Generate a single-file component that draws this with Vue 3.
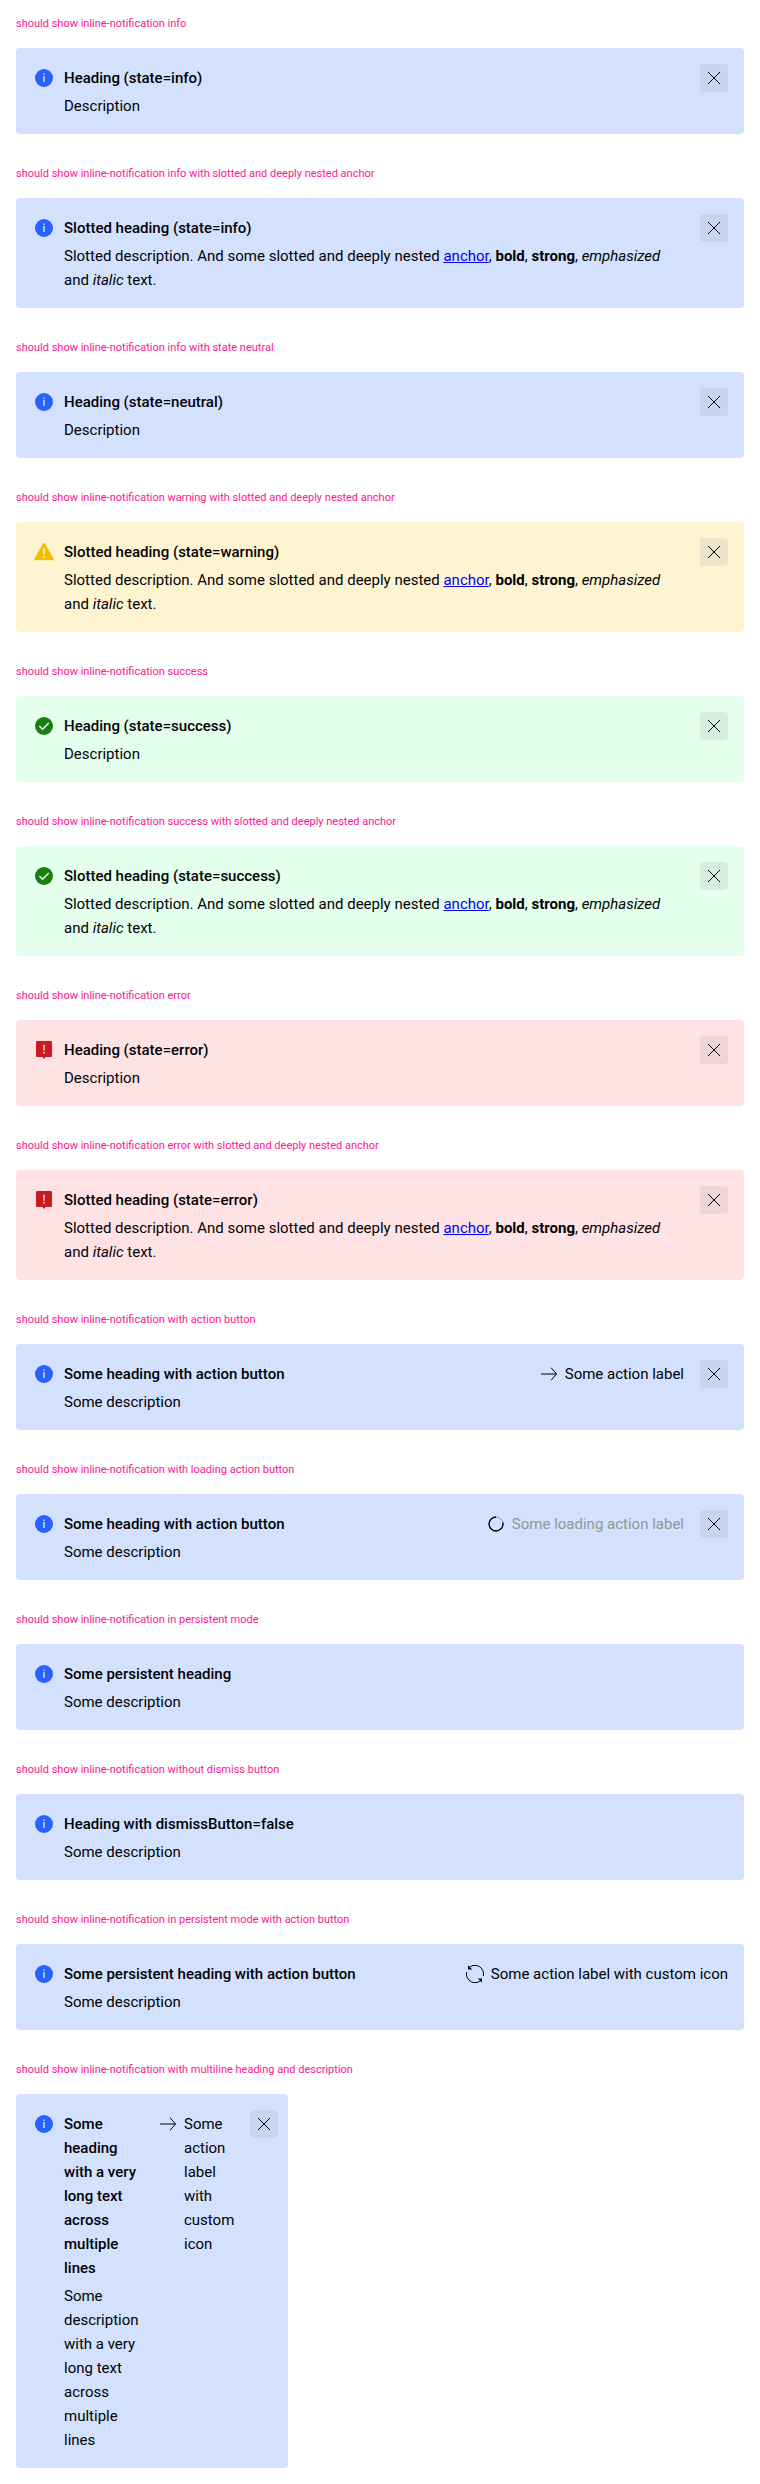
<script setup>
const cases = [
  { title: 'should show inline-notification info', state: 'info', heading: 'Heading (state=info)', text: 'Description', dismiss: true },
  { title: 'should show inline-notification info with slotted and deeply nested anchor', state: 'info', heading: 'Slotted heading (state=info)', slotted: true, dismiss: true },
  { title: 'should show inline-notification info with state neutral', state: 'info', heading: 'Heading (state=neutral)', text: 'Description', dismiss: true },
  { title: 'should show inline-notification warning with slotted and deeply nested anchor', state: 'warning', heading: 'Slotted heading (state=warning)', slotted: true, dismiss: true },
  { title: 'should show inline-notification success', state: 'success', heading: 'Heading (state=success)', text: 'Description', dismiss: true },
  { title: 'should show inline-notification success with slotted and deeply nested anchor', state: 'success', heading: 'Slotted heading (state=success)', slotted: true, dismiss: true },
  { title: 'should show inline-notification error', state: 'error', heading: 'Heading (state=error)', text: 'Description', dismiss: true },
  { title: 'should show inline-notification error with slotted and deeply nested anchor', state: 'error', heading: 'Slotted heading (state=error)', slotted: true, dismiss: true },
  { title: 'should show inline-notification with action button', state: 'info', heading: 'Some heading with action button', text: 'Some description', action: 'Some action label', icon: 'arrow', dismiss: true },
  { title: 'should show inline-notification with loading action button', state: 'info', heading: 'Some heading with action button', text: 'Some description', action: 'Some loading action label', icon: 'spinner', dismiss: true },
  { title: 'should show inline-notification in persistent mode', state: 'info', heading: 'Some persistent heading', text: 'Some description' },
  { title: 'should show inline-notification without dismiss button', state: 'info', heading: 'Heading with dismissButton=false', text: 'Some description' },
  { title: 'should show inline-notification in persistent mode with action button', state: 'info', heading: 'Some persistent heading with action button', text: 'Some description', action: 'Some action label with custom icon', icon: 'reset' },
  { title: 'should show inline-notification with multiline heading and description', state: 'info', heading: 'Some heading with a very long text across multiple lines', text: 'Some description with a very long text across multiple lines', action: 'Some action label with custom icon', icon: 'arrow', dismiss: true, narrow: true },
]
</script>

<template>
  <main class="page">
    <section v-for="c in cases" :key="c.title" class="case">
      <p class="label">{{ c.title }}</p>
      <div class="note" :class="[c.state, { narrow: c.narrow }]">
        <svg class="icon" viewBox="0 0 24 24" aria-hidden="true">
          <template v-if="c.state === 'info'">
            <circle cx="12" cy="12" r="9" fill="#2762ff" />
            <path d="M11.2 7.6h1.5v1.5h-1.5zM11.2 10h1.5v6h-1.5z" fill="#d3e1ff" />
          </template>
          <template v-else-if="c.state === 'warning'">
            <path d="M12 3c.5 0 .8.2 1.1.7l8.6 15.2c.5.8.2 1.3-.7 1.3H3c-.9 0-1.2-.5-.7-1.3L10.9 3.7C11.2 3.2 11.5 3 12 3z" fill="#f4be00" />
            <path d="M11.1 8.2h1.8l-.2 6.3h-1.4zM11.1 16h1.8v1.8h-1.8z" fill="#fff4d2" />
          </template>
          <template v-else-if="c.state === 'success'">
            <circle cx="12" cy="12" r="9" fill="#197e10" />
            <path d="M7.4 12.1l3.2 3.1 6.1-6.3" fill="none" stroke="#e4ffec" stroke-width="1.5" />
          </template>
          <template v-else>
            <path d="M5.5 3h13c1 0 1.5.5 1.5 1.5v13c0 1-.5 1.500-1.500 1.500H13.600L12 20.900 10.400 19H5.500C4.500 19 4 18.500 4 17.500v-13C4 3.500 4.500 3 5.500 3z" fill="#cc1922" />
            <path d="M11.200 6.800h1.600l-.2 6h-1.200zM11.200 14h1.600v1.600h-1.600z" fill="#ffe2e4" />
          </template>
        </svg>
        <div class="body">
          <h2 class="heading">{{ c.heading }}</h2>
          <p v-if="c.slotted" class="text">
            Slotted description. And some slotted and deeply nested <a href="#">anchor</a>, <b>bold</b>,
            <strong>strong</strong>, <em>emphasized</em> and <i>italic</i> text.
          </p>
          <p v-else class="text">{{ c.text }}</p>
        </div>
        <button v-if="c.action" type="button" class="action" :disabled="c.icon === 'spinner'">
          <svg class="glyph" viewBox="0 0 24 24" aria-hidden="true">
            <path v-if="c.icon === 'arrow'" d="M4 12h15.500M14 5.700l5.500 6.300-5.500 6.300" />
            <template v-else-if="c.icon === 'spinner'">
              <circle cx="12" cy="12" r="7" class="track" />
              <path d="M18.900 10.500A7 7 0 1 1 12 5" class="arc" />
            </template>
            <template v-else>
              <path d="M5.200 6.600A8.600 8.600 0 0 1 20.300 14M18.800 17.400A8.600 8.600 0 0 1 3.700 10" />
              <path d="M5 3.200v4.200h4.200zM19 20.800v-4.200h-4.200z" class="tip" />
            </template>
          </svg>
          <span>{{ c.action }}</span>
        </button>
        <button v-if="c.dismiss" type="button" class="close" aria-label="Close notification">
          <svg viewBox="0 0 24 24" aria-hidden="true"><path d="M6 6l12 12M18 6L6 18" /></svg>
        </button>
      </div>
    </section>
  </main>
</template>

<style>
body {
  margin: 0;
  background: #fff;
}
</style>

<style scoped>
.page {
  display: flex;
  flex-direction: column;
  gap: 32px;
  padding: 16px;
  font-family: Roboto, "Liberation Sans", sans-serif;
  font-size: 15px;
  line-height: 24px;
  color: #010205;
}
.label {
  margin: 0 0 16px;
  font-size: 11px;
  line-height: 16px;
  color: #ff1493;
}
.note {
  display: flex;
  align-items: flex-start;
  padding: 16px;
  border-radius: 4px;
  background: #d3e1ff;
}
.warning { background: #fff4d2; }
.success { background: #e4ffec; }
.error { background: #ffe2e4; }
.narrow {
  box-sizing: border-box;
  max-width: 272px;
  padding-right: 10px;
}
.icon {
  flex: none;
  width: 24px;
  height: 24px;
  margin: 2px 8px 0 0;
}
.body {
  flex: 1;
  display: grid;
  gap: 4px;
  padding-top: 2px;
}
.heading,
.text {
  margin: 0;
  font-size: inherit;
}
.heading { font-weight: 500; }
.text a { color: #00e; }
.action {
  display: flex;
  align-items: flex-start;
  gap: 4px;
  margin: 2px 0 0 16px;
  padding: 0;
  border: 0;
  background: none;
  font: inherit;
  color: inherit;
  text-align: left;
}
.action:disabled span { color: #949598; }
.narrow .action {
  flex: none;
  width: 78px;
}
.glyph {
  flex: none;
  width: 24px;
  height: 24px;
}
.glyph,
.close svg {
  fill: none;
  stroke: #010205;
  stroke-width: 1;
}
.glyph .track { stroke: #949598; }
.glyph .arc { stroke-width: 1.3; }
.glyph .tip {
  fill: #010205;
  stroke: none;
}
.close {
  flex: none;
  display: grid;
  place-items: center;
  width: 28px;
  height: 28px;
  margin-left: 16px;
  padding: 0;
  border: 0;
  border-radius: 4px;
  background: rgba(128, 136, 160, 0.14);
}
.close svg {
  width: 24px;
  height: 24px;
}
</style>
